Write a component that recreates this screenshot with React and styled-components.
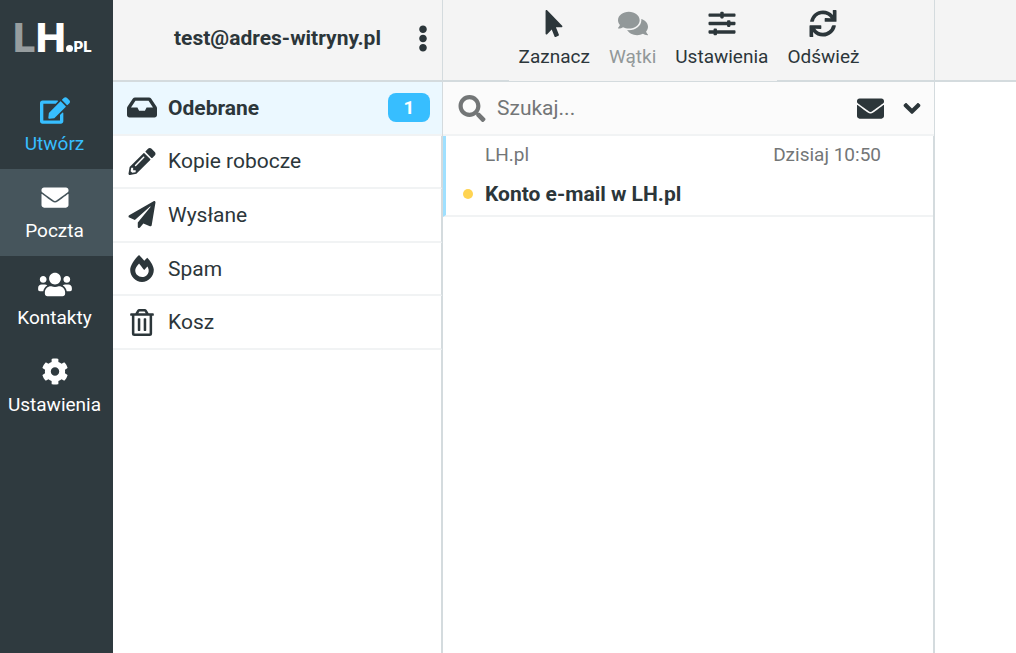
import React from 'react';
import styled, { createGlobalStyle, css } from 'styled-components';
import {
  FaEdit, FaEnvelope, FaUsers, FaCog, FaEllipsisV, FaInbox, FaPencilAlt,
  FaPaperPlane, FaFireAlt, FaRegTrashAlt, FaMousePointer, FaComments,
  FaSlidersH, FaSync, FaSearch, FaAngleDown,
} from 'react-icons/fa';

const c = {
  main: '#37beff',
  font: '#2c363a',
  nav: '#2f3a3f',
  navActive: '#46555c',
  header: '#f4f4f4',
  border: '#d4dbde',
  rowBorder: '#f1f3f4',
  selected: '#ebf8ff',
  muted: '#737677',
};

const GlobalStyle = createGlobalStyle`
  *, *::before, *::after { box-sizing: border-box; }
  body {
    margin: 0;
    background: #fff;
    color: ${c.font};
    font-family: Roboto, "Liberation Sans", sans-serif;
    font-size: 21px;
    line-height: 32px;
  }
  a { color: inherit; text-decoration: none; }
  button { margin: 0; padding: 0; border: 0; background: none; color: inherit; font: inherit; cursor: pointer; }
  svg { display: block; }
`;

const Icon = styled.span`
  display: block;
  flex: none;
  width: ${p => p.$width || 30}px;
  height: 27px;
  svg { width: 100%; height: 27px; }
`;

const Layout = styled.div`
  display: flex;
  min-height: 100vh;
`;

const Nav = styled.nav`
  flex: none;
  width: 113px;
  background: ${c.nav};
  color: #fff;
`;

const Logo = styled.a`
  display: flex;
  align-items: baseline;
  height: 82px;
  padding: 14px 0 0 13px;
  font: 800 40px/48px Inter, sans-serif;
`;
const LogoFaded = styled.span`opacity: 0.5;`;
const LogoDot = styled.span`
  width: 7px;
  height: 7px;
  margin-right: 1px;
  border-radius: 50%;
  background: #fff;
`;
const LogoSmall = styled.span`font-size: 15px;`;

const NavItem = styled.a`
  display: flex;
  flex-direction: column;
  align-items: center;
  gap: 6px;
  height: 87px;
  padding: 15px 4px 0 0;
  font-size: 19px;
  line-height: 28px;
  color: ${p => (p.$accent ? c.main : '#fff')};
  background: ${p => (p.$active ? c.navActive : 'transparent')};
`;

const Column = styled.section`
  display: flex;
  flex-direction: column;
  min-width: 0;
  flex: ${p => (p.$width ? `0 1 ${p.$width}px` : '1 1 0')};
`;

const edge = css`border-right: 1px solid ${c.border};`;

const Header = styled.header`
  display: flex;
  flex: none;
  align-items: center;
  justify-content: center;
  height: 82px;
  background: ${c.header};
  border-bottom: 2px solid ${c.border};
  ${p => p.$edge && edge}
`;

const AccountHeader = styled(Header)`
  display: grid;
  grid-template-columns: 38px 1fr 38px;
  padding-bottom: 4px;
`;
const Account = styled.span`
  font-weight: 700;
  text-align: center;
`;

const Body = styled.div`
  display: flex;
  flex: 1;
  flex-direction: column;
  ${p => p.$edge && edge}
`;
const Rest = styled.div`
  flex: 1;
  ${edge}
`;

const Folders = styled.ul`
  display: grid;
  grid-template-rows: repeat(5, 1fr);
  height: 268px;
  margin: 0;
  padding: 0;
  list-style: none;
`;
const Folder = styled.li`
  border-bottom: 2px solid ${c.rowBorder};
  border-right: ${p => (p.$selected ? 0 : 1)}px solid ${c.border};
  background: ${p => (p.$selected ? c.selected : '#fff')};
  font-weight: ${p => (p.$selected ? 700 : 400)};
`;
const FolderLink = styled.a`
  display: flex;
  align-items: center;
  gap: 11px;
  height: 100%;
  padding: 0 12px 0 14px;
`;
const Badge = styled.span`
  margin-left: auto;
  width: 42px;
  height: 29px;
  border-radius: 8px;
  background: ${c.main};
  color: #fff;
  font-size: 19px;
  font-weight: 700;
  line-height: 29px;
  text-align: center;
`;

const Tool = styled.button`
  display: flex;
  flex-direction: column;
  align-items: center;
  align-self: flex-start;
  gap: 6px;
  height: ${p => (p.$tall ? 81 : 80)}px;
  padding: 10px 9px 0 10px;
  background: ${c.header};
  font-size: 19px;
  line-height: 28px;
  &:disabled { color: #929899; }
`;

const Search = styled.form`
  display: flex;
  flex: none;
  align-items: center;
  height: 54px;
  padding: 0 9px 0 14px;
  border-bottom: 2px solid ${c.rowBorder};
  background: #fbfbfb;
`;
const SearchLabel = styled.label`color: ${c.muted};`;
const SearchInput = styled.input`
  flex: 1;
  min-width: 0;
  height: 32px;
  padding: 0;
  margin-left: 10px;
  border: 0;
  outline: 0;
  background: none;
  color: ${c.font};
  font: inherit;
  &::placeholder { color: ${c.muted}; opacity: 1; }
`;
const SearchButton = styled.button`
  margin-left: 15px;
`;

const Messages = styled.ul`
  margin: 0;
  padding: 0;
  list-style: none;
  ${edge}
`;
const Message = styled.li`
  display: grid;
  grid-template-columns: 39px 1fr auto;
  grid-template-rows: 38px 39px;
  align-items: center;
  padding: 0 52px 2px 0;
  border-left: 3px solid #9fe0ff;
  border-bottom: 2px solid ${c.rowBorder};
`;
const Meta = styled.span`
  font-size: 19px;
  line-height: 28px;
  color: ${c.muted};
`;
const Sender = styled(Meta)`grid-column: 2;`;
const Unread = styled.span`
  justify-self: center;
  width: 10px;
  height: 10px;
  margin-left: 4px;
  border-radius: 50%;
  background: #ffd452;
`;
const Subject = styled.a`
  grid-column: 2 / 4;
  font-weight: 700;
`;

const navItems = [
  { label: 'Utwórz', icon: <FaEdit />, accent: true },
  { label: 'Poczta', icon: <FaEnvelope />, active: true },
  { label: 'Kontakty', icon: <FaUsers />, width: 34 },
  { label: 'Ustawienia', icon: <FaCog /> },
];

const folders = [
  { label: 'Odebrane', icon: <FaInbox />, unread: 1 },
  { label: 'Kopie robocze', icon: <FaPencilAlt /> },
  { label: 'Wysłane', icon: <FaPaperPlane /> },
  { label: 'Spam', icon: <FaFireAlt /> },
  { label: 'Kosz', icon: <FaRegTrashAlt /> },
];

const tools = [
  { label: 'Zaznacz', icon: <FaMousePointer />, tall: true },
  { label: 'Wątki', icon: <FaComments />, tall: true, disabled: true },
  { label: 'Ustawienia', icon: <FaSlidersH />, tall: true },
  { label: 'Odśwież', icon: <FaSync /> },
];

export default function App() {
  return (
    <>
      <GlobalStyle />
      <Layout>
        <Nav>
          <Logo href="#">
            <LogoFaded>L</LogoFaded>H<LogoDot /><LogoSmall>PL</LogoSmall>
          </Logo>
          {navItems.map(n => (
            <NavItem key={n.label} href="#" $accent={n.accent} $active={n.active}>
              <Icon $width={n.width}>{n.icon}</Icon>
              {n.label}
            </NavItem>
          ))}
        </Nav>

        <Column $width={330}>
          <AccountHeader $edge>
            <span />
            <Account>test@adres-witryny.pl</Account>
            <button type="button" aria-label="Menu"><Icon $width={38}><FaEllipsisV /></Icon></button>
          </AccountHeader>
          <Body $edge>
            <Folders>
              {folders.map(f => (
                <Folder key={f.label} $selected={!!f.unread}>
                  <FolderLink href="#">
                    <Icon>{f.icon}</Icon>
                    {f.label}
                    {f.unread && <Badge>{f.unread}</Badge>}
                  </FolderLink>
                </Folder>
              ))}
            </Folders>
            <Rest />
          </Body>
        </Column>

        <Column $width={492}>
          <Header $edge>
            {tools.map(t => (
              <Tool key={t.label} type="button" $tall={t.tall} disabled={t.disabled}>
                <Icon>{t.icon}</Icon>
                {t.label}
              </Tool>
            ))}
          </Header>
          <Body $edge>
            <Search>
              <SearchLabel htmlFor="search" aria-label="Szukaj"><Icon><FaSearch /></Icon></SearchLabel>
              <SearchInput id="search" placeholder="Szukaj..." />
              <SearchButton type="button" aria-label="Nieprzeczytane"><Icon $width={27}><FaEnvelope /></Icon></SearchButton>
              <SearchButton type="button" aria-label="Opcje"><Icon $width={26}><FaAngleDown /></Icon></SearchButton>
            </Search>
            <Messages>
              <Message>
                <Sender>LH.pl</Sender>
                <Meta>Dzisiaj 10:50</Meta>
                <Unread />
                <Subject href="#">Konto e-mail w LH.pl</Subject>
              </Message>
            </Messages>
            <Rest />
          </Body>
        </Column>

        <Column>
          <Header />
        </Column>
      </Layout>
    </>
  );
}
